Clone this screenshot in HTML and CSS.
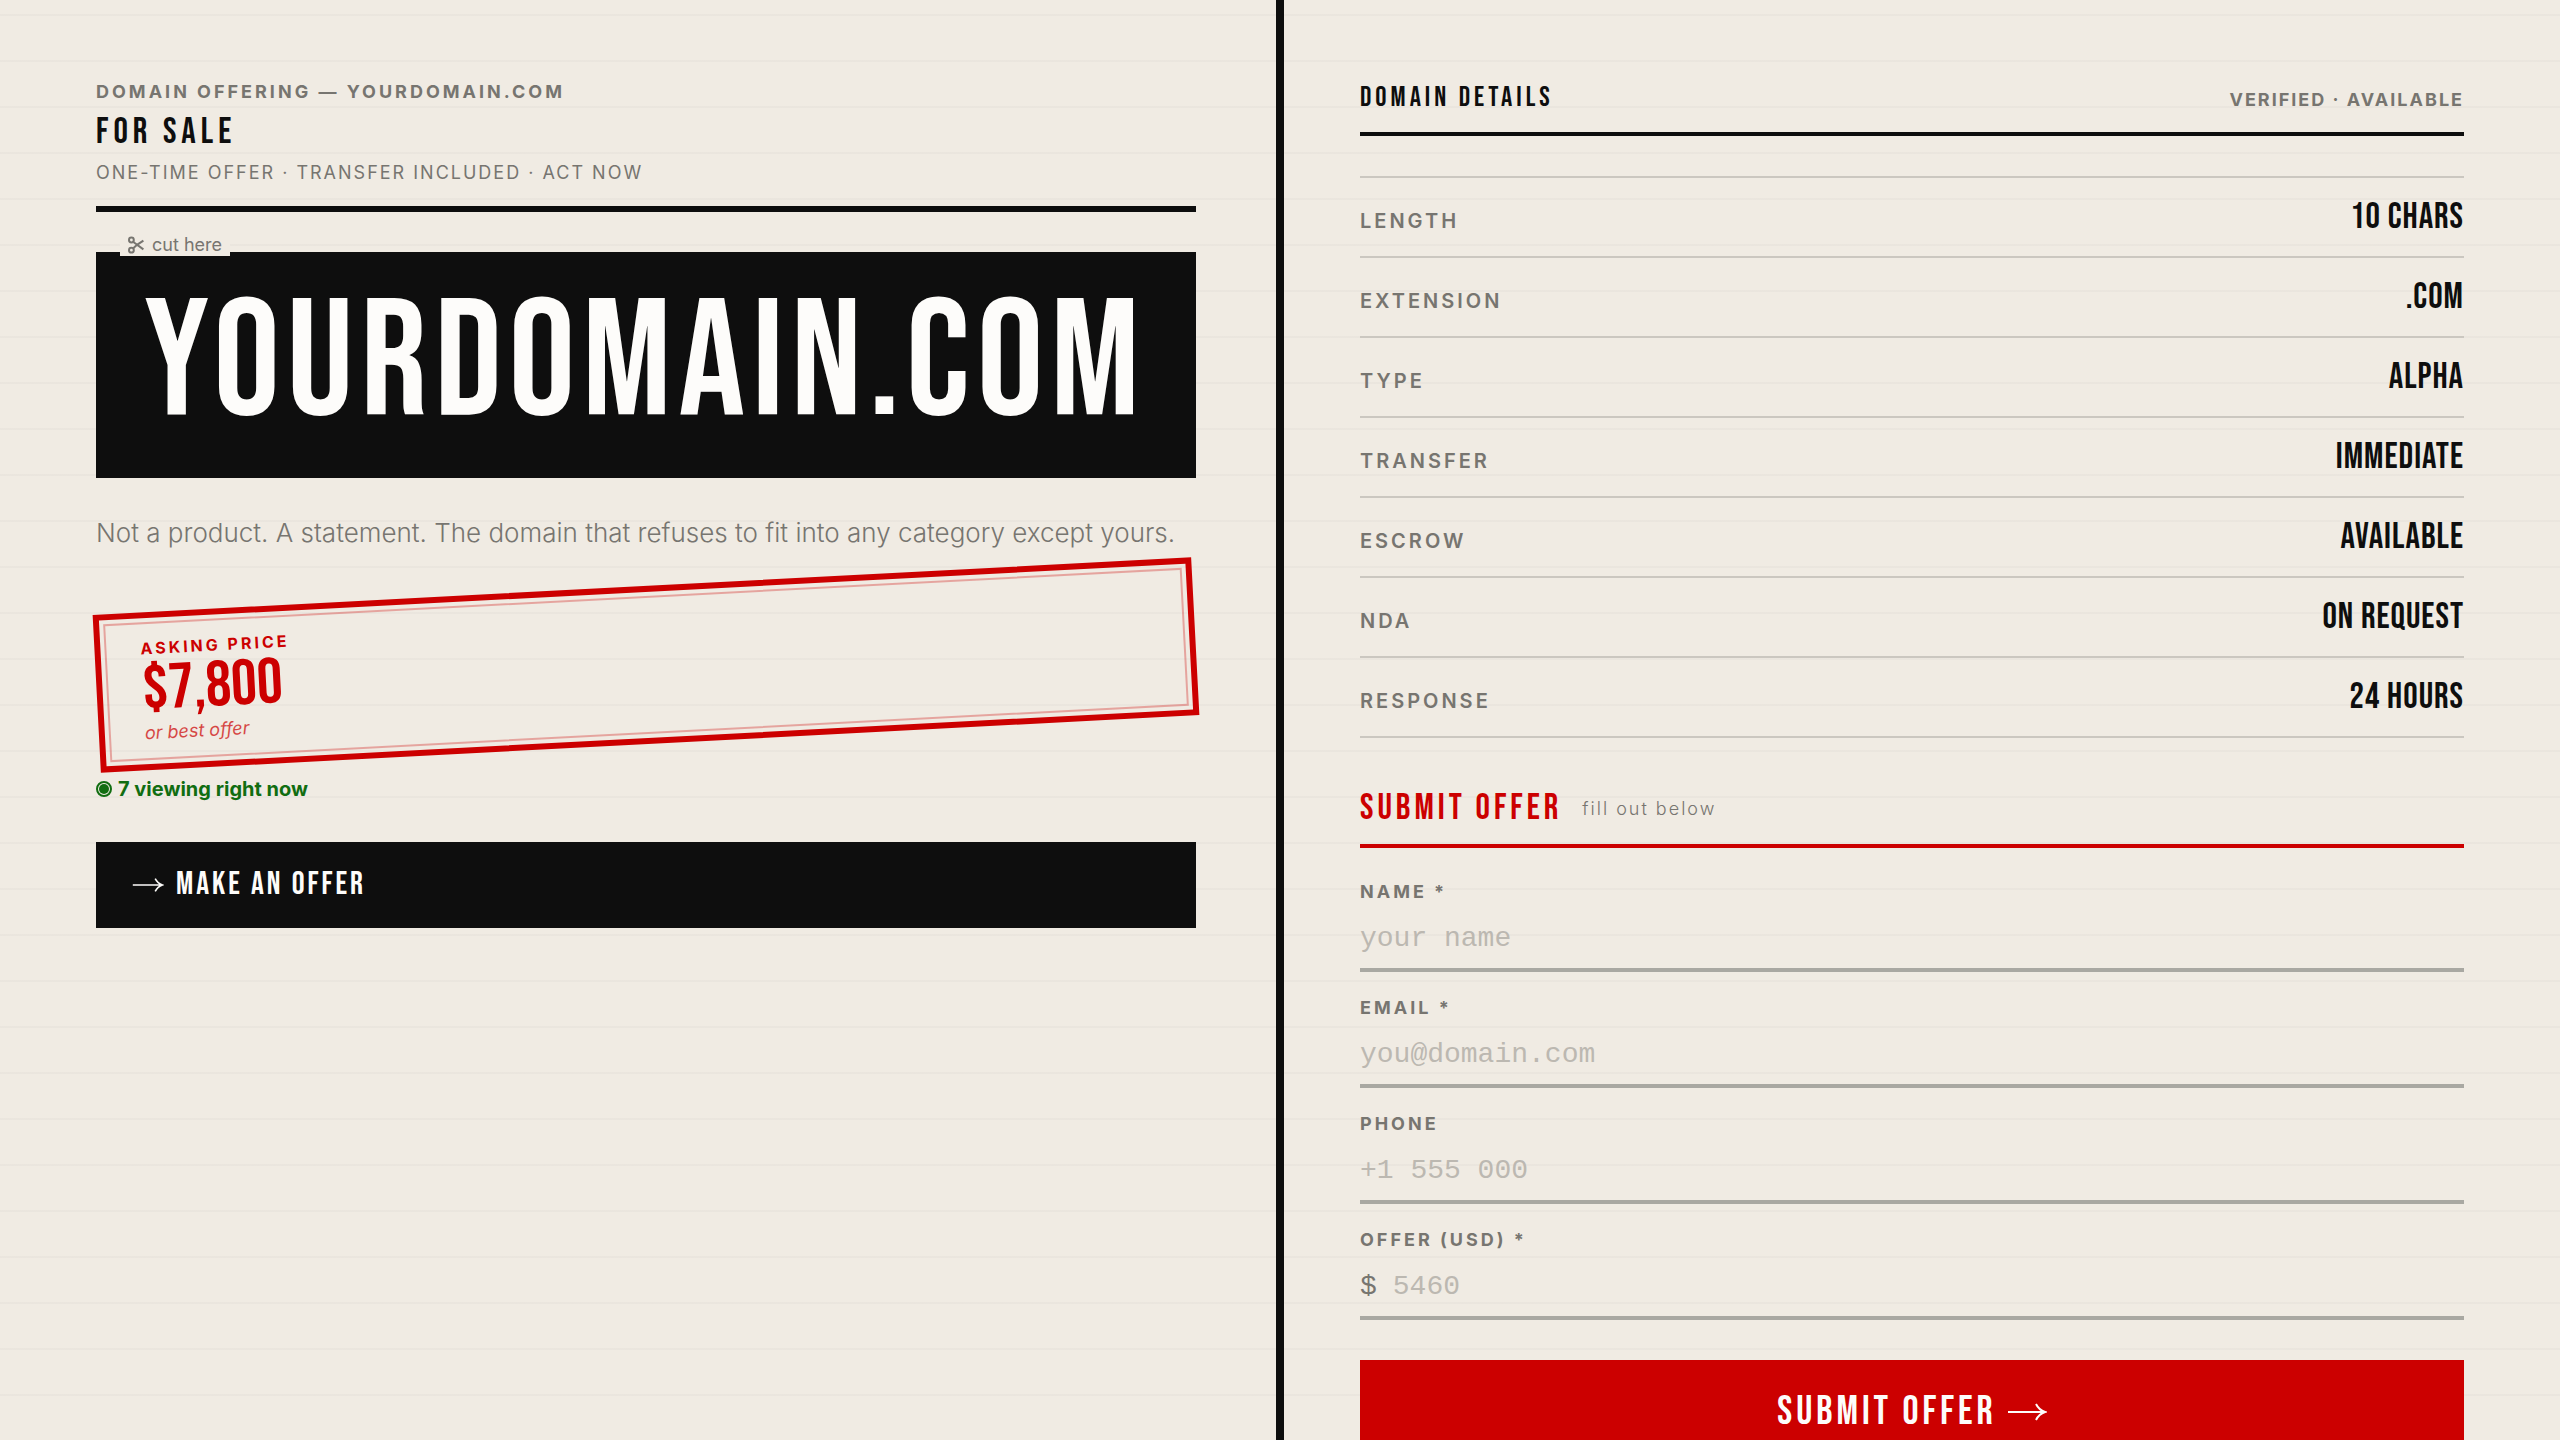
FILE: index.html
```
<!DOCTYPE html>
<html lang="en">
<head>
    <meta charset="UTF-8">
    <meta name="viewport" content="width=device-width, initial-scale=1.0">
    <title>yourdomain.com - For Sale</title>
    <link rel="stylesheet" href="styles.css">
</head>
<body>
    <div class="wrap">
        <main class="left">
            <header class="head">
                <p class="kicker">Domain Offering — yourdomain.com</p>
                <p class="sale">For Sale</p>
                <p class="terms">One-time offer · Transfer included · Act now</p>
            </header>
            <div class="block">
                <span class="cut">
                    <svg class="scissors" viewBox="0 0 16 18" aria-hidden="true">
                        <circle cx="3.4" cy="4" r="2.4"/>
                        <circle cx="3.4" cy="14.2" r="2.4"/>
                        <path d="M5 5.8 15.4 13.4M5 12.4 9 8.8 15.4 4.6"/>
                    </svg>
                    cut here
                </span>
                <h1 class="domain">yourdomain.com</h1>
            </div>
            <p class="desc">Not a product. A statement. The domain that refuses to fit into any category except yours.</p>
            <div class="stamp">
                <p class="stamp-label">Asking price</p>
                <p class="price">$7,800</p>
                <p class="obo">or best offer</p>
            </div>
            <p class="viewing">
                <svg class="eye" viewBox="0 0 16 16" aria-hidden="true">
                    <circle class="ring" cx="8" cy="8" r="7"/>
                    <circle class="dot" cx="8" cy="8" r="5"/>
                </svg>
                7 viewing right now
            </p>
            <a class="offer-link" href="#offer">
                <svg class="arrow" viewBox="0 0 40 20" aria-hidden="true"><path d="M1 10H38M29 2Q32 8 38 10Q32 12 29 18"/></svg>
                Make an offer
            </a>
        </main>
        <div class="divider"></div>
        <section class="right">
            <div class="details-head">
                <h2 class="details-title">Domain details</h2>
                <span class="status">Verified · Available</span>
            </div>
            <table class="details">
                <tbody>
                    <tr><th scope="row">Length</th><td>10 chars</td></tr>
                    <tr><th scope="row">Extension</th><td>.com</td></tr>
                    <tr><th scope="row">Type</th><td>Alpha</td></tr>
                    <tr><th scope="row">Transfer</th><td>Immediate</td></tr>
                    <tr><th scope="row">Escrow</th><td>Available</td></tr>
                    <tr><th scope="row">NDA</th><td>On request</td></tr>
                    <tr><th scope="row">Response</th><td>24 hours</td></tr>
                </tbody>
            </table>
            <div class="form-head">
                <h2 class="form-title">Submit offer</h2>
                <span class="hint">fill out below</span>
            </div>
            <form class="form" id="offer">
                <div class="field">
                    <label for="name">Name *</label>
                    <div class="line"><input type="text" id="name" placeholder="your name" required></div>
                </div>
                <div class="field">
                    <label for="email">Email *</label>
                    <div class="line"><input type="email" id="email" placeholder="you@domain.com" required></div>
                </div>
                <div class="field">
                    <label for="phone">Phone</label>
                    <div class="line"><input type="tel" id="phone" placeholder="+1 555 000"></div>
                </div>
                <div class="field">
                    <label for="amount">Offer (USD) *</label>
                    <div class="line"><span class="currency">$</span><input type="text" inputmode="numeric" id="amount" placeholder="5460" required></div>
                </div>
                <button class="submit" type="submit">
                    Submit offer
                    <svg class="arrow" viewBox="0 0 40 20" aria-hidden="true"><path d="M1 10H38M29 2Q32 8 38 10Q32 12 29 18"/></svg>
                </button>
            </form>
        </section>
    </div>
</body>
</html>
```
FILE: styles.css
```
:root {
    --paper: #f0ebe3;
    --ink: #0e0e0e;
    --grey: #777570;
    --red: #cc0000;
    --display: "Bebas Neue", "Liberation Sans Narrow", sans-serif;
    --type: "Special Elite", "Liberation Mono", monospace;
}
* {
    margin: 0;
    padding: 0;
    box-sizing: border-box;
}
body {
    color: var(--ink);
    background-color: var(--paper);
    font-family: Inter, sans-serif;
    font-size: 18px;
    line-height: 22px;
}

/* ruled paper, counted from the bottom edge */
.wrap {
    display: grid;
    grid-template-columns: 1fr 8px 1fr;
    height: 100vh;
    background-image: repeating-linear-gradient(0deg, transparent 0 44px, rgba(0, 0, 0, 0.025) 44px 46px);
}
.divider {
    background-color: var(--ink);
}
.left, .right {
    overflow: auto;
    scrollbar-width: none;
    padding-bottom: 80px;
}
.left {
    padding-top: 80px;
    padding-left: 96px;
    padding-right: 80px;
}
.right {
    padding-top: 80px;
    padding-left: 76px;
    padding-right: 96px;
}

/* left side */
.head {
    display: flex;
    flex-direction: column;
    gap: 8px;
    padding-bottom: 22px;
    border-bottom: 6px solid var(--ink);
    text-transform: uppercase;
}
.kicker {
    color: var(--grey);
    font-weight: 700;
    line-height: 24px;
    letter-spacing: 3px;
}
.sale {
    font-family: var(--display);
    font-size: 36px;
    line-height: 42px;
    letter-spacing: 5px;
}
.terms {
    color: var(--grey);
    letter-spacing: 2px;
}
.block {
    position: relative;
    margin-top: 40px;
    padding: 28px 48px;
    background-color: var(--ink);
}
.cut {
    position: absolute;
    top: -18px;
    left: 24px;
    display: flex;
    align-items: center;
    gap: 8px;
    padding: 0 8px;
    color: var(--grey);
    background-color: var(--paper);
}
.scissors {
    width: 16px;
    height: 18px;
    fill: none;
    stroke: currentColor;
    stroke-width: 2;
}
.domain {
    color: #fdfcfa;
    font-family: var(--display);
    font-weight: 400;
    font-size: 166px;
    line-height: 170px;
    letter-spacing: 7px;
    text-transform: uppercase;
    white-space: nowrap;
}
.desc {
    margin-top: 32px;
    color: var(--grey);
    font-weight: 300;
    font-size: 26px;
    line-height: 46px;
}
.stamp {
    position: relative;
    margin-top: 30px;
    padding: 20px 40px;
    border: 6px solid var(--red);
    color: var(--red);
    transform: rotate(-3deg);
}
.stamp::after {
    content: "";
    position: absolute;
    inset: 4px;
    border: 2px solid var(--red);
    opacity: 0.3;
}
.stamp-label {
    font-weight: 700;
    font-size: 16px;
    line-height: 20px;
    letter-spacing: 3px;
    text-transform: uppercase;
}
.price {
    font-family: var(--display);
    font-size: 64px;
    line-height: 64px;
}
.obo {
    font-style: italic;
    opacity: 0.7;
}
.viewing {
    display: flex;
    align-items: center;
    gap: 6px;
    margin-top: 32px;
    color: #116d11;
    font-weight: 700;
    font-size: 20px;
    line-height: 26px;
}
.eye {
    width: 16px;
    height: 16px;
}
.ring {
    fill: none;
    stroke: currentColor;
    stroke-width: 2;
}
.dot {
    fill: currentColor;
}
.offer-link {
    display: flex;
    align-items: center;
    gap: 12px;
    margin-top: 40px;
    padding: 20px 36px;
    color: #fdfcfa;
    background-color: var(--ink);
    font-family: var(--display);
    font-size: 32px;
    line-height: 46px;
    letter-spacing: 3px;
    text-decoration: none;
    text-transform: uppercase;
}
.arrow {
    width: 32px;
    fill: none;
    stroke: currentColor;
    stroke-width: 2;
}

/* right side */
.details-head, .form-head {
    display: flex;
}
.details-head {
    justify-content: space-between;
    align-items: baseline;
    padding-bottom: 16px;
    border-bottom: 4px solid var(--ink);
}
.details-title {
    font-family: var(--display);
    font-weight: 400;
    font-size: 28px;
    line-height: 36px;
    letter-spacing: 4px;
    text-transform: uppercase;
}
.status {
    color: var(--grey);
    font-weight: 700;
    letter-spacing: 2px;
    text-transform: uppercase;
}
.details {
    width: 100%;
    margin-top: 40px;
    border-top: 2px solid #cbc7c0;
    border-spacing: 0;
    text-transform: uppercase;
}
.details th, .details td {
    height: 80px;
    padding: 18px 0 12px;
    border-bottom: 2px solid #cbc7c0;
    vertical-align: baseline;
    line-height: 44px;
}
.details th {
    color: var(--grey);
    font-weight: 600;
    font-size: 20px;
    letter-spacing: 3px;
    text-align: left;
}
.details td {
    font-family: var(--display);
    font-size: 36px;
    letter-spacing: 1px;
    text-align: right;
}
.form-head {
    align-items: center;
    gap: 20px;
    margin-top: 50px;
    padding-bottom: 14px;
    border-bottom: 4px solid var(--red);
}
.form-title {
    color: var(--red);
    font-family: var(--display);
    font-weight: 400;
    font-size: 36px;
    line-height: 42px;
    letter-spacing: 4px;
    text-transform: uppercase;
}
.hint {
    color: var(--grey);
    font-weight: 300;
    letter-spacing: 2px;
}
.form {
    display: flex;
    flex-direction: column;
    gap: 24px;
    margin-top: 32px;
}
.field {
    display: flex;
    flex-direction: column;
    gap: 6px;
}
.field label {
    color: var(--grey);
    font-weight: 700;
    line-height: 24px;
    letter-spacing: 3px;
    text-transform: uppercase;
}
.line {
    display: flex;
    gap: 16px;
    padding: 12px 0;
    border-bottom: 4px solid #a9a8a2;
    font-family: var(--type);
    font-size: 28px;
    line-height: 34px;
}
.line input {
    flex: 1;
    height: 34px;
    border: 0;
    outline: 0;
    background: none;
    color: var(--ink);
    font: inherit;
}
.line input::placeholder {
    color: #bcb8b1;
}
.currency {
    color: var(--grey);
}
.submit {
    display: flex;
    justify-content: center;
    align-items: center;
    gap: 10px;
    margin-top: 16px;
    padding: 28px;
    border: 0;
    color: #fdfcfa;
    background-color: var(--red);
    font-family: var(--display);
    font-size: 40px;
    line-height: 48px;
    letter-spacing: 4px;
    text-transform: uppercase;
}
.submit .arrow {
    width: 40px;
}
```
